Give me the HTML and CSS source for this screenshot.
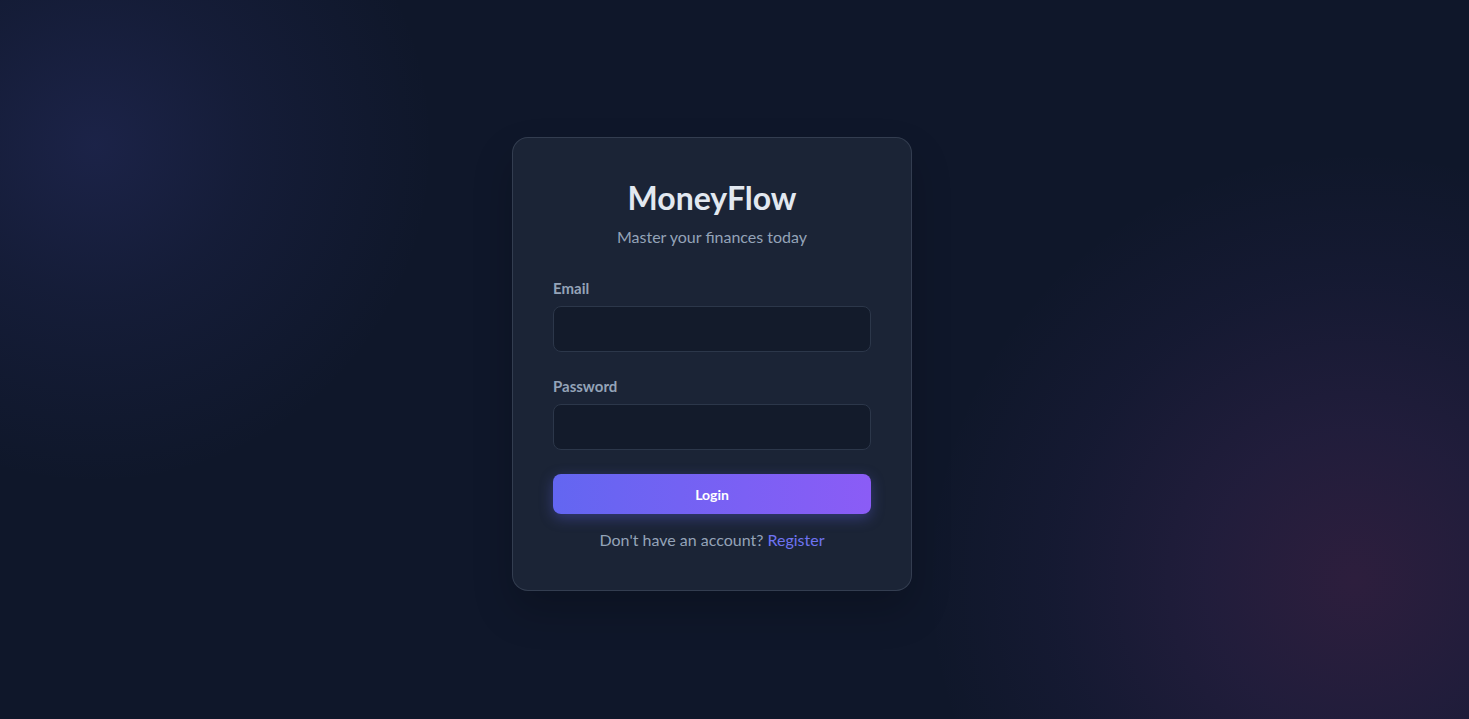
FILE: index.html
```html
<!DOCTYPE html>
<html lang="en">
<head>
<meta charset="utf-8">
<title>MoneyFlow - Login</title>
<link rel="stylesheet" href="styles.css">
</head>
<body>
<main class="page">
  <div class="card">
    <h1 class="title">MoneyFlow</h1>
    <p class="subtitle">Master your finances today</p>
    <form class="form">
      <div class="field">
        <label class="label" for="email">Email</label>
        <input class="input" id="email" type="email">
      </div>
      <div class="field">
        <label class="label" for="password">Password</label>
        <input class="input" id="password" type="password">
      </div>
      <button class="btn" type="button">Login</button>
    </form>
    <p class="footer">Don't have an account? <a class="link" href="#">Register</a></p>
  </div>
</main>
</body>
</html>
```
FILE: styles.css
```css
* { box-sizing: border-box; }
html, body { height: 100%; }
body {
  margin: 0;
  font-family: Lato, "Noto Sans", sans-serif;
  color: #e2e8f0;
  background-color: #0f172a;
  background-image:
    radial-gradient(circle 340px at 95px 145px, rgba(99, 102, 241, 0.15) 0, rgba(99, 102, 241, 0.07) 45%, rgba(99, 102, 241, 0) 100%),
    radial-gradient(circle 430px at 1355px 580px, rgba(217, 70, 170, 0.15) 0, rgba(190, 80, 210, 0.1) 35%, rgba(168, 85, 247, 0.04) 70%, rgba(168, 85, 247, 0) 100%);
  overflow: hidden;
}
.page {
  height: 100%;
  display: flex;
  align-items: center;
  justify-content: center;
  padding: 9px 45px 0 0;
}
.card {
  width: 400px;
  padding: 40px 40px 38px;
  background: #1b2436;
  border: 1px solid rgba(148, 163, 184, 0.2);
  border-radius: 16px;
  box-shadow: 0 20px 40px rgba(0, 0, 0, 0.2);
  text-align: center;
}
.title {
  margin: 0;
  font-size: 32px;
  line-height: 40px;
  font-weight: 700;
  color: #e2e8f0;
}
.subtitle {
  margin: 7px 0 0;
  font-size: 16px;
  line-height: 24px;
  color: #94a3b8;
}
.form {
  margin-top: 29px;
  display: flex;
  flex-direction: column;
  gap: 24px;
  text-align: left;
}
.field {
  display: flex;
  flex-direction: column;
  gap: 8px;
}
.label {
  font-size: 15px;
  line-height: 20px;
  font-weight: 700;
  color: #94a3b8;
}
.input {
  height: 46px;
  width: 100%;
  background: #131b2b;
  border: 1px solid #2c374a;
  border-radius: 8px;
  color: #e2e8f0;
  font-family: inherit;
  font-size: 15px;
  padding: 0 14px;
  outline: none;
}
.btn {
  height: 40px;
  width: 100%;
  border: 0;
  border-radius: 8px;
  background: linear-gradient(90deg, #6366f1, #8b5cf6);
  color: #fff;
  font-family: inherit;
  font-size: 14px;
  font-weight: 700;
  box-shadow: 0 4px 14px rgba(99, 102, 241, 0.35);
  cursor: pointer;
}
.footer {
  margin: 14px 0 0;
  font-size: 16px;
  line-height: 24px;
  color: #94a3b8;
}
.link {
  color: #6f73f0;
  text-decoration: none;
}
```
